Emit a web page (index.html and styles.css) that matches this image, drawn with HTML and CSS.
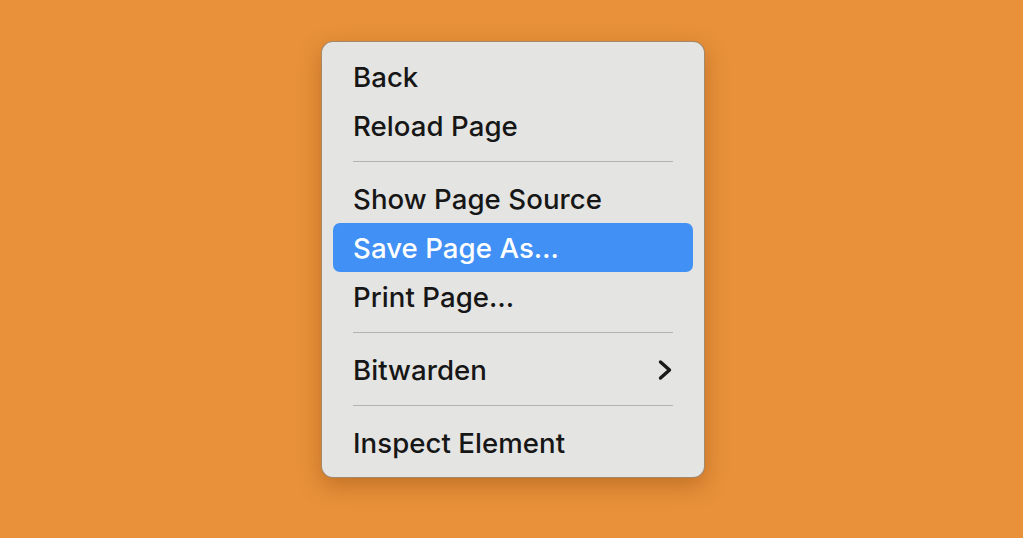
FILE: index.html
```html
<!DOCTYPE html>
<html>
<head>
<meta charset="utf-8">
<link rel="stylesheet" href="styles.css">
</head>
<body>
<div class="menu">
  <div class="item">Back</div>
  <div class="item">Reload Page</div>
  <div class="sep"></div>
  <div class="item">Show Page Source</div>
  <div class="item active">Save Page As…</div>
  <div class="item">Print Page…</div>
  <div class="sep"></div>
  <div class="item submenu">Bitwarden
    <svg class="chev" width="16" height="22" viewBox="0 0 16 22"><path d="M3.5 3 L12.5 11 L3.5 19" fill="none" stroke="#1a1a1a" stroke-width="3.4" stroke-linecap="round" stroke-linejoin="round"/></svg>
  </div>
  <div class="sep"></div>
  <div class="item">Inspect Element</div>
</div>
</body>
</html>
```
FILE: styles.css
```css
html, body {
  margin: 0;
  height: 100%;
}
body {
  background: #e8913a;
  padding: 41px 0 0 321px;
  box-sizing: border-box;
  font-family: Inter, "Noto Sans", sans-serif;
  overflow: hidden;
}
.menu {
  width: 384px;
  box-sizing: border-box;
  background: #e4e4e2;
  border: 1px solid rgba(110, 60, 15, 0.55);
  border-radius: 12px;
  padding: 10px 11px 10px;
  box-shadow: 0 8px 22px rgba(120, 55, 0, 0.35);
}
.item {
  height: 49px;
  display: flex;
  align-items: center;
  justify-content: space-between;
  padding: 1px 20px 0 20px;
  font-size: 27.6px;
  font-weight: 500;
  letter-spacing: 0.05px;
  color: #161616;
  border-radius: 7px;
  box-sizing: border-box;
}
.item.active {
  background: #4190f5;
  color: #ffffff;
}
.sep {
  height: 24px;
  box-sizing: border-box;
  padding-bottom: 2px;
  display: flex;
  align-items: center;
  margin: 0 20px;
}
.sep::before {
  content: "";
  flex: 1;
  height: 1px;
  background: #b3b3b1;
}
.chev {
  display: block;
}
```
